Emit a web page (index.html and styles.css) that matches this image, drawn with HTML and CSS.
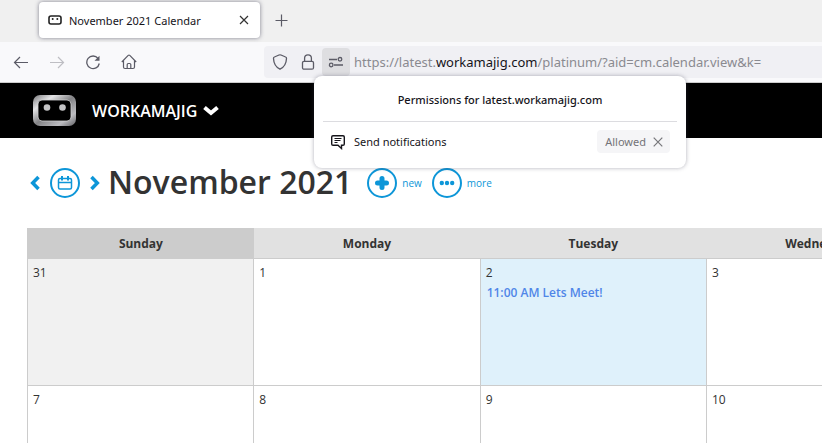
FILE: index.html
```html
<!DOCTYPE html>
<html lang="en">
<head>
    <meta charset="UTF-8">
    <meta name="viewport" content="width=device-width, initial-scale=1.0">
    <title>November 2021 Calendar</title>
    <link rel="stylesheet" href="styles.css">
</head>
<body>
    <div class="browser">
        <div class="tab-strip">
            <div class="tab">
                <svg class="favicon" width="14" height="10" viewBox="0 0 14 10">
                    <rect x="1" y="1" width="12" height="8" rx="2" fill="#fff" stroke="#222" stroke-width="1.6"/>
                    <circle cx="4.7" cy="3.9" r="1" fill="#222"/>
                    <circle cx="9.3" cy="3.9" r="1" fill="#222"/>
                </svg>
                <span class="tab-title">November 2021 Calendar</span>
                <button type="button" class="icon-button" aria-label="Close tab">
                    <svg width="10" height="10" viewBox="0 0 10 10" fill="none" stroke="#333" stroke-width="1.2"><path d="M1 1l8 8M9 1l-8 8"/></svg>
                </button>
            </div>
            <button type="button" class="icon-button" aria-label="New tab">
                <svg width="13" height="13" viewBox="0 0 13 13" fill="none" stroke="#5b5b66" stroke-width="1.2"><path d="M6.500 .5v12M.5 6.500h12"/></svg>
            </button>
        </div>

        <div class="toolbar">
            <div class="nav-buttons">
                <button type="button" class="icon-button" aria-label="Back">
                    <svg width="16" height="16" viewBox="0 0 16 16" fill="none" stroke="#5b5b66" stroke-width="1.2"><path d="M15 8.500H1.500M7 3L1.500 8.500 7 14"/></svg>
                </button>
                <button type="button" class="icon-button" aria-label="Forward" disabled>
                    <svg width="16" height="16" viewBox="0 0 16 16" fill="none" stroke="#bebec3" stroke-width="1.2"><path d="M1 8.500h13.500M9 3L14.500 8.500 9 14"/></svg>
                </button>
                <button type="button" class="icon-button" aria-label="Reload">
                    <svg width="16" height="16" viewBox="0 0 16 16" fill="none" stroke="#5b5b66" stroke-width="1.3"><path d="M13 4.300A6.300 6.300 0 1 0 14.300 9.500"/><path d="M14.500 1.800v5h-5z" fill="#5b5b66" stroke="none"/></svg>
                </button>
                <button type="button" class="icon-button" aria-label="Home">
                    <svg width="16" height="16" viewBox="0 0 16 16" fill="none" stroke="#5b5b66" stroke-width="1.2"><path d="M.8 8L7.200 1.400q.8-.7 1.600 0L15.200 8M2.500 6.500V13q0 1.500 1.500 1.500h8q1.500 0 1.500-1.500V6.500M6.200 14.500v-4q0-1 1-1h1.600q1 0 1 1v4"/></svg>
                </button>
            </div>
            <div class="address-bar">
                <div class="address-icons">
                    <svg width="16" height="16" viewBox="0 0 16 16" fill="none" stroke="#5b5b66" stroke-width="1.3"><path d="M8 .8Q8.500.8 9 1L13.600 3q1 .4.9 1.500Q14.200 12.200 8 15.200 1.800 12.200 1.500 4.500 1.400 3.400 2.400 3L7 1q.5-.2 1-.2z"/></svg>
                    <svg width="14" height="16" viewBox="0 0 14 16" fill="none" stroke="#5b5b66" stroke-width="1.3"><rect x="1.500" y="7.300" width="11" height="7.900" rx="1.500"/><path d="M3.600 7V4.200a3.400 3.400 0 0 1 6.800 0V7"/></svg>
                </div>
                <button type="button" class="permissions-button" aria-label="Site permissions">
                    <svg width="16" height="12" viewBox="0 0 16 12" fill="none" stroke="#5b5b66" stroke-width="1.3"><path d="M1 3.500h8M6 9h9"/><circle cx="12" cy="3.300" r="1.800"/><circle cx="3.200" cy="9" r="1.800"/></svg>
                </button>
                <a class="url" href="#">https://latest.<span class="domain">workamajig.com</span>/platinum/?aid=cm.calendar.view&amp;k=</a>

                <div class="permissions-popup">
                    <p class="popup-title">Permissions for latest.workamajig.com</p>
                    <div class="permission">
                        <svg width="16" height="16" viewBox="0 0 16 16" fill="none" stroke="#15141a" stroke-width="1.400"><path d="M3 1.700h10q1.300 0 1.300 1.300v7q0 1.300-1.300 1.300h-1.500v3.200L8 11.300H3q-1.300 0-1.300-1.300V3q0-1.300 1.300-1.300z"/><path d="M4.500 4.500h7M4.500 6.500h6M4.500 8.500h3" stroke-width="1"/></svg>
                        <span class="permission-name">Send notifications</span>
                        <button type="button" class="permission-state">
                            Allowed
                            <svg width="10" height="10" viewBox="0 0 10 10" fill="none" stroke="#76767a" stroke-width="1.200"><path d="M.7.7l8.600 8.600M9.300.7L.7 9.300"/></svg>
                        </button>
                    </div>
                </div>
            </div>
        </div>
    </div>

    <header class="app-header">
        <svg class="logo" width="44" height="32" viewBox="0 0 44 32">
            <defs>
                <linearGradient id="metal" x1="0" y1="0" x2="1" y2="1">
                    <stop offset="0" stop-color="#77777a"/>
                    <stop offset=".25" stop-color="#e4e4e6"/>
                    <stop offset=".5" stop-color="#838386"/>
                    <stop offset=".78" stop-color="#bcbcc0"/>
                    <stop offset="1" stop-color="#606064"/>
                </linearGradient>
            </defs>
            <rect x="1" y="0" width="43" height="31" rx="7" fill="url(#metal)"/>
            <rect x="6" y="5" width="33" height="21" rx="4" fill="#000" stroke="#d0d0d2" stroke-width=".8"/>
            <circle cx="15" cy="12.500" r="3.300" fill="#c4c4c6"/>
            <circle cx="30.500" cy="12.500" r="3.300" fill="#c4c4c6"/>
        </svg>
        <button type="button" class="app-menu">
            WORKAMAJIG
            <svg width="16" height="11" viewBox="0 0 16 11" fill="none" stroke="#fff" stroke-width="4"><path d="M1.500 2.500L8 8l6.500-5.500"/></svg>
        </button>
    </header>

    <main>
        <div class="month-bar">
            <button type="button" class="icon-button" aria-label="Previous month">
                <svg width="10" height="16" viewBox="0 0 10 16" fill="none" stroke="#0d96d8" stroke-width="3.500"><path d="M8.500 2L2.700 8l5.800 6"/></svg>
            </button>
            <button type="button" class="round-button" aria-label="Pick a date">
                <svg width="16" height="14" viewBox="0 0 16 14" fill="none" stroke="#0d96d8" stroke-width="1.500"><rect x="1.500" y="2.500" width="13" height="10.500" rx="1.500"/><path d="M1.500 6.500h13"/><path d="M5 0v4.500M11 0v4.500" stroke-width="2"/></svg>
            </button>
            <button type="button" class="icon-button next" aria-label="Next month">
                <svg width="10" height="16" viewBox="0 0 10 16" fill="none" stroke="#0d96d8" stroke-width="3.500"><path d="M1.500 2l5.800 6-5.800 6"/></svg>
            </button>
            <h1>November 2021</h1>
            <button type="button" class="action">
                <span class="round-button">
                    <svg width="14" height="14" viewBox="0 0 14 14" fill="none" stroke="#0d96d8" stroke-width="5" stroke-linecap="round"><path d="M7 2.500v9M2.500 7h9"/></svg>
                </span>
                new
            </button>
            <button type="button" class="action">
                <span class="round-button">
                    <svg width="16" height="6" viewBox="0 0 16 6" fill="#0d96d8"><circle cx="2.800" cy="3" r="2.200"/><circle cx="8" cy="3" r="2.200"/><circle cx="13.200" cy="3" r="2.200"/></svg>
                </span>
                more
            </button>
        </div>

        <div class="calendar-wrap">
            <table class="calendar">
                <thead>
                    <tr>
                        <th class="weekend">Sunday</th>
                        <th>Monday</th>
                        <th>Tuesday</th>
                        <th>Wednesday</th>
                    </tr>
                </thead>
                <tbody>
                    <tr>
                        <td class="other-month">31</td>
                        <td>1</td>
                        <td class="today">2<a class="event" href="#">11:00 AM Lets Meet!</a></td>
                        <td>3</td>
                    </tr>
                    <tr>
                        <td>7</td>
                        <td>8</td>
                        <td>9</td>
                        <td>10</td>
                    </tr>
                </tbody>
            </table>
        </div>
    </main>
</body>
</html>
```
FILE: styles.css
```css
* {
    box-sizing: border-box;
}
body {
    margin: 0;
    height: 100vh;
    overflow: hidden;
    background-color: #fff;
    color: #333;
    font-family: "Open Sans", sans-serif;
    font-size: 12px;
}
svg {
    display: block;
    flex: none;
}
button {
    border: none;
    background: none;
    padding: 0;
    font: inherit;
    color: inherit;
    cursor: pointer;
}

/* Browser window */
.browser {
    font-family: "Noto Sans", sans-serif;
    font-size: 11px;
    color: #15141a;
}
.tab-strip {
    display: flex;
    align-items: center;
    gap: 15px;
    height: 42px;
    padding: 2px 0 4px 39px;
    background-color: #f0f0f0;
}
.tab {
    display: flex;
    align-items: center;
    gap: 7px;
    width: 221px;
    height: 36px;
    padding: 0 11px 0 9px;
    background-color: #fff;
    border-radius: 4px;
    box-shadow: 0 0 4px rgba(80, 80, 100, 0.7);
}
.tab-title {
    flex: 1;
    white-space: nowrap;
}
.toolbar {
    display: flex;
    align-items: center;
    gap: 127px;
    height: 41px;
    background-color: #f9f9fb;
    border-bottom: 1px solid #ccc;
}
.nav-buttons {
    display: flex;
    gap: 20px;
    padding-left: 13px;
}
.address-bar {
    position: relative;
    flex: 1;
    display: flex;
    align-items: center;
    height: 32px;
    background-color: #f0f0f4;
    border-radius: 4px 0 0 4px;
}
.address-icons {
    display: flex;
    gap: 13px;
    padding: 0 7px 0 8px;
}
.permissions-button {
    display: flex;
    align-items: center;
    justify-content: center;
    width: 28px;
    height: 28px;
    background-color: #dedee1;
    border-radius: 4px;
}
.url {
    margin-left: 4px;
    color: #8a8a90;
    font-size: 13px;
    text-decoration: none;
    white-space: nowrap;
}
.domain {
    color: #15141a;
}

/* Permissions popup */
.permissions-popup {
    position: absolute;
    top: 30px;
    left: 50px;
    z-index: 10;
    width: 372px;
    padding: 0 9px 10px;
    background-color: #fff;
    border-radius: 8px;
    box-shadow: 0 0 4px rgba(60, 60, 80, 0.4);
}
.popup-title {
    margin: 0;
    padding-top: 2px;
    border-bottom: 1px solid #dcdce0;
    font-weight: 500;
    line-height: 43px;
    text-align: center;
}
.permission {
    display: flex;
    align-items: center;
    gap: 8px;
    padding: 8px 7px 5px;
}
.permission-name {
    flex: 1;
}
.permission-state {
    display: flex;
    align-items: center;
    gap: 7px;
    height: 23px;
    padding: 0 7px 0 8px;
    background-color: #f5f5f7;
    border-radius: 4px;
    color: #737378;
}

/* Application */
.app-header {
    display: flex;
    align-items: center;
    gap: 16px;
    height: 55px;
    padding-left: 32px;
    background-color: #000;
    color: #fff;
}
.app-menu {
    display: flex;
    align-items: center;
    gap: 6px;
    font-size: 16px;
    font-weight: 600;
}
.month-bar {
    display: flex;
    align-items: center;
    height: 90px;
    padding-left: 30px;
    color: #0d96d8;
}
.round-button {
    display: flex;
    align-items: center;
    justify-content: center;
    width: 30px;
    height: 30px;
    border: 2px solid #0d96d8;
    border-radius: 50%;
}
.month-bar > .round-button {
    margin: 0 10px;
}
h1 {
    margin: 0 15px 0 8px;
    padding-bottom: 2px;
    color: #333;
    font-size: 32px;
    font-weight: 600;
    line-height: 44px;
    white-space: nowrap;
}
.action {
    display: flex;
    align-items: center;
    gap: 5px;
    margin-right: 10px;
    font-size: 10px;
}

/* Calendar runs past the right edge of the window */
.calendar-wrap {
    margin-left: 27px;
    overflow: hidden;
}
.calendar {
    width: 114%;
    border-collapse: collapse;
    table-layout: fixed;
}
.calendar th {
    height: 30px;
    padding: 2px 0 0;
    background-color: #e1e1e1;
    border-bottom: 1px solid #ccc;
    font-weight: 700;
}
.calendar th.weekend {
    background-color: #ccc;
    border-left: 1px solid #ccc;
}
.calendar td {
    height: 127px;
    padding: 5px;
    border: 1px solid #ccc;
    line-height: 17px;
    vertical-align: top;
}
.calendar td.other-month {
    background-color: #f1f1f1;
}
.calendar td.today {
    background-color: #dff1fb;
}
.event {
    display: block;
    padding: 3px 1px;
    color: #4f86e8;
    font-weight: 600;
    text-decoration: none;
}
```
